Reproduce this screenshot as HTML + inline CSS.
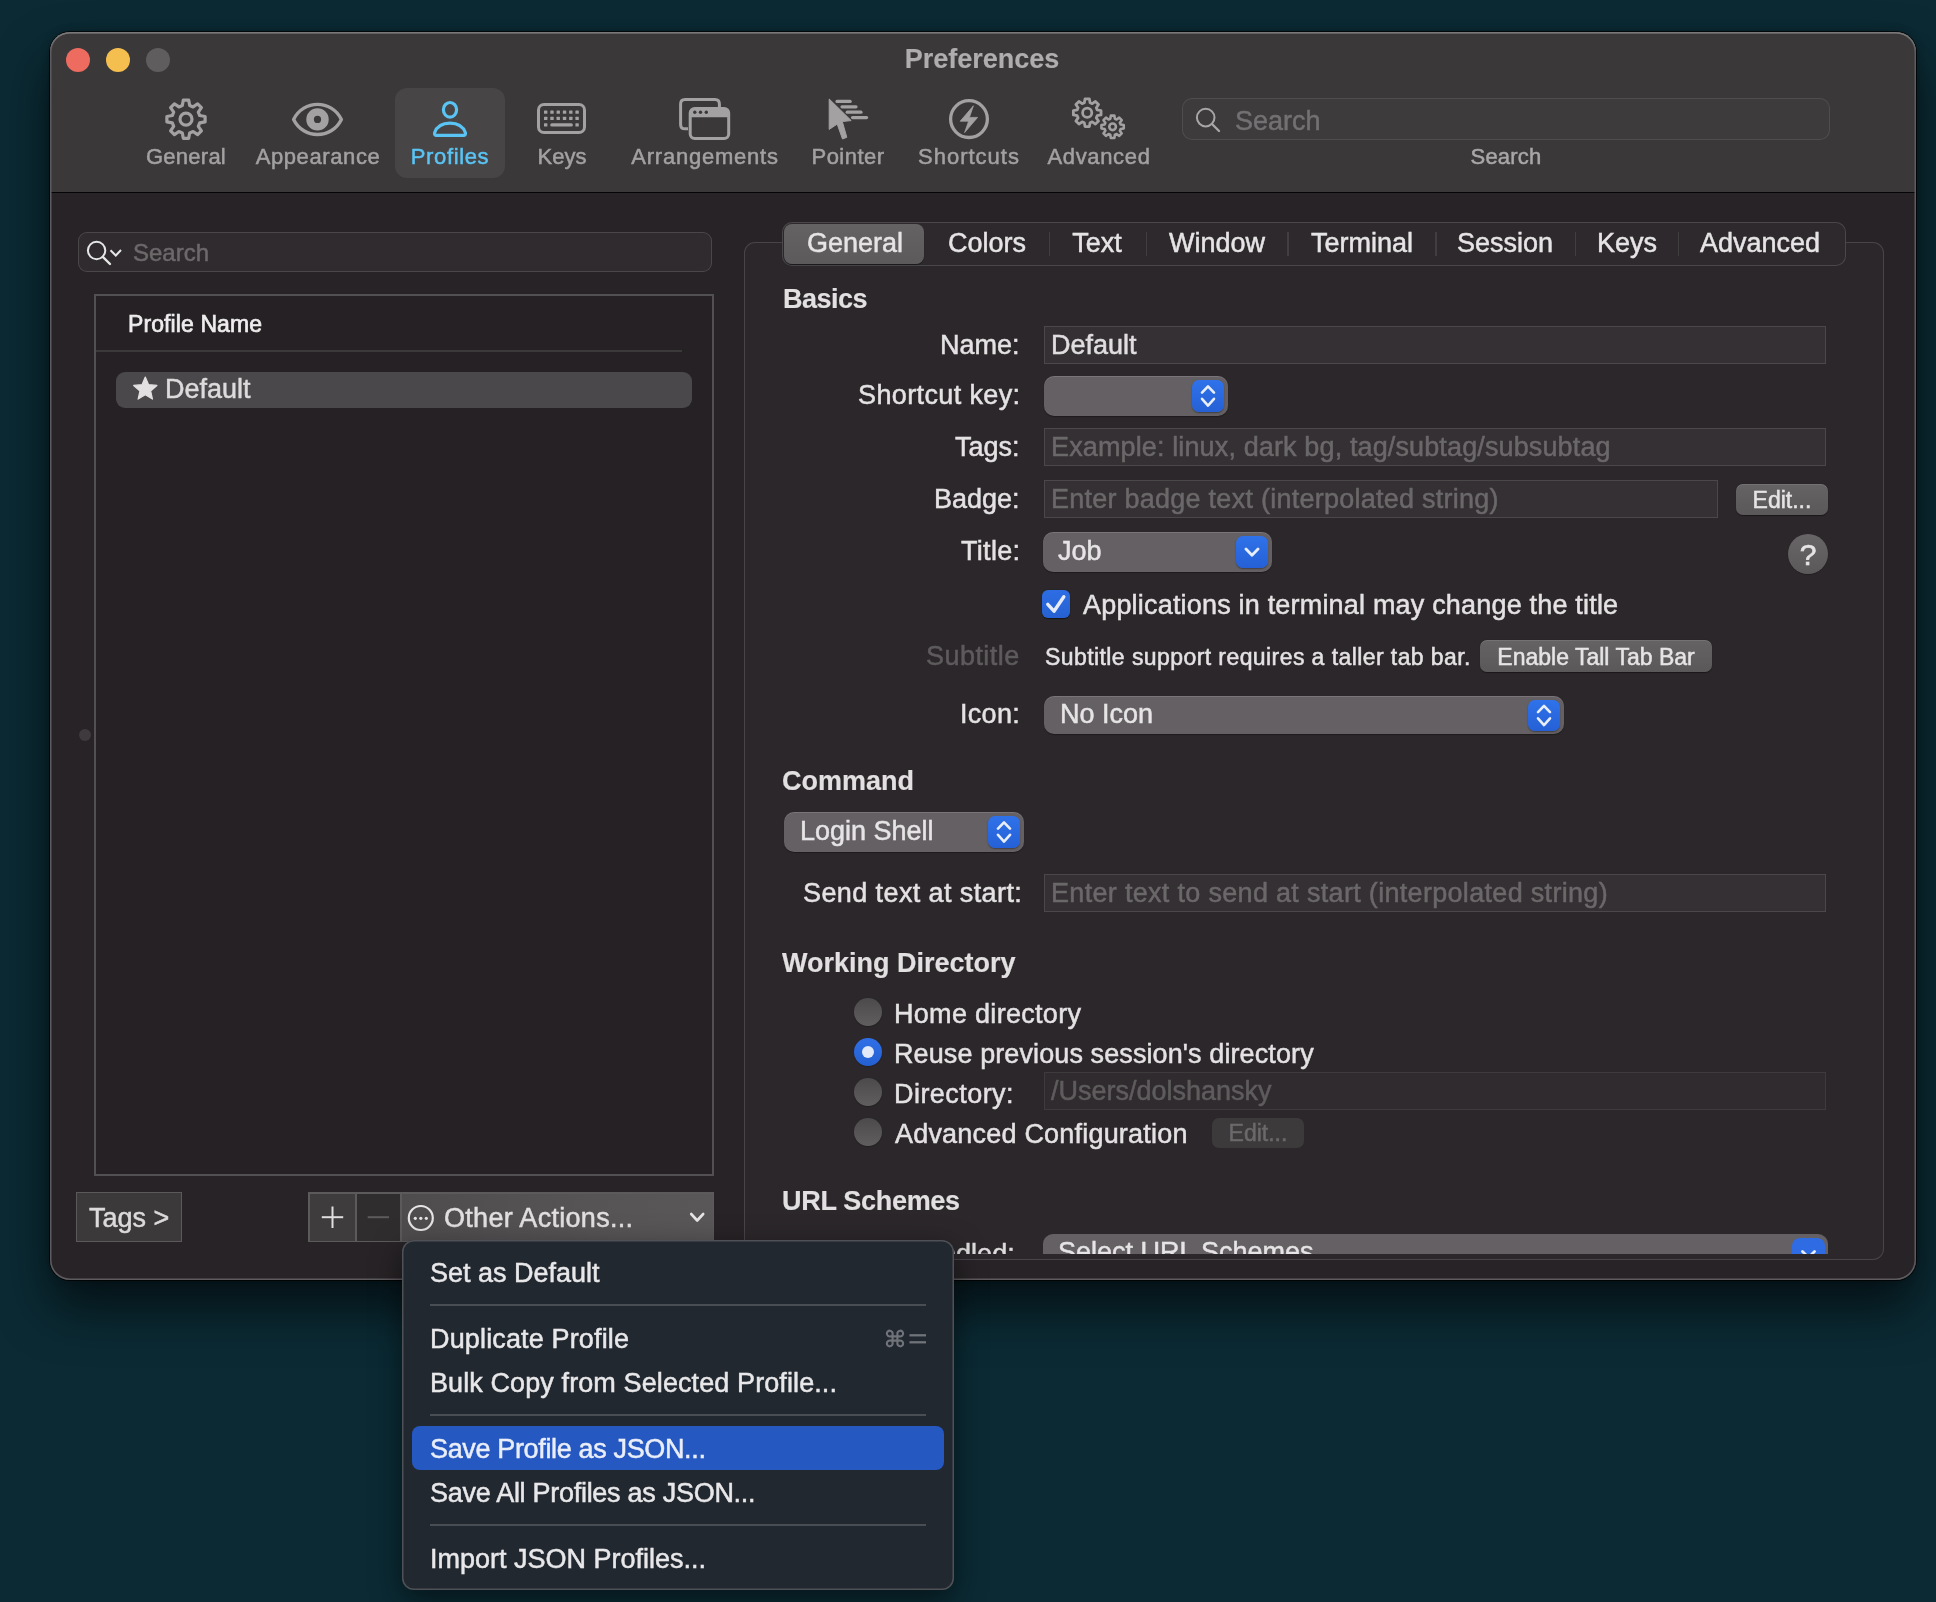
<!DOCTYPE html><html><head><meta charset="utf-8"><style>
html,body{margin:0;padding:0;width:1936px;height:1602px;overflow:hidden}
body{background:#0c2833;font-family:"Liberation Sans",sans-serif;position:relative}
.t{position:absolute;white-space:nowrap;will-change:transform;-webkit-text-stroke:0.5px currentColor}
.r{position:absolute}
</style></head><body>
<div class="r" style="left:0px;top:0px;width:1936px;height:1602px;background:#0b2a34;border-radius:0px;"></div>
<div class="r" style="left:50px;top:32px;width:1866px;height:1248px;background:#272326;border-radius:20px;box-shadow:0 28px 50px rgba(0,0,0,0.6),0 0 8px rgba(0,0,0,0.3),0 0 0 1px rgba(0,0,0,0.7)"></div>
<div class="r" style="left:50px;top:32px;width:1866px;height:161px;background:#3a3839;border-radius:0px;border-radius:20px 20px 0 0"></div>
<div class="r" style="left:51px;top:192px;width:1864px;height:1px;background:#050505;border-radius:0px;"></div>
<div class="r" style="left:50px;top:32px;width:1866px;height:1248px;background:transparent;border-radius:20px;box-shadow:inset 0 1.5px 0 #7a7879,inset 0 0 0 1.5px #5e5b5e"></div>
<div class="r" style="left:66px;top:48px;width:24px;height:24px;background:#ee6b60;border-radius:12px;"></div>
<div class="r" style="left:106px;top:48px;width:24px;height:24px;background:#f5bf4f;border-radius:12px;"></div>
<div class="r" style="left:146px;top:48px;width:24px;height:24px;background:#5f5d5e;border-radius:12px;"></div>
<div class="t" style="left:582px;width:800px;text-align:center;top:46.14px;font-size:27px;line-height:27px;color:#afadae;font-weight:bold;-webkit-text-stroke:0.15px currentColor;">Preferences</div>
<div class="r" style="left:395px;top:88px;width:110px;height:90px;background:#474546;border-radius:12px;"></div>
<div class="t" style="left:-214.5px;width:800px;text-align:center;top:146.38px;font-size:22px;line-height:22px;color:#a3a1a2;letter-spacing:0.25px;">General</div>
<div class="t" style="left:-82.5px;width:800px;text-align:center;top:146.38px;font-size:22px;line-height:22px;color:#a3a1a2;letter-spacing:0.6px;">Appearance</div>
<div class="t" style="left:50px;width:800px;text-align:center;top:146.38px;font-size:22px;line-height:22px;color:#5ac4f4;letter-spacing:0.64px;">Profiles</div>
<div class="t" style="left:161.5px;width:800px;text-align:center;top:146.38px;font-size:22px;line-height:22px;color:#a3a1a2;">Keys</div>
<div class="t" style="left:304.5px;width:800px;text-align:center;top:146.38px;font-size:22px;line-height:22px;color:#a3a1a2;letter-spacing:0.77px;">Arrangements</div>
<div class="t" style="left:448px;width:800px;text-align:center;top:146.38px;font-size:22px;line-height:22px;color:#a3a1a2;letter-spacing:0.45px;">Pointer</div>
<div class="t" style="left:569px;width:800px;text-align:center;top:146.38px;font-size:22px;line-height:22px;color:#a3a1a2;letter-spacing:1.0px;">Shortcuts</div>
<div class="t" style="left:698.5px;width:800px;text-align:center;top:146.38px;font-size:22px;line-height:22px;color:#a3a1a2;letter-spacing:0.67px;">Advanced</div>
<div class="t" style="left:1105.5px;width:800px;text-align:center;top:146.38px;font-size:22px;line-height:22px;color:#a9a7a8;letter-spacing:0.2px;">Search</div>
<div class="r" style="left:1182px;top:98px;width:648px;height:42px;background:#3d3b3c;border-radius:10px;box-shadow:inset 0 0 0 1px #4f4d4e;"></div>
<div class="t" style="left:1235px;top:108.14px;font-size:27px;line-height:27px;color:#737173;">Search</div>
<svg class="r" style="left:0;top:0" width="1936" height="200" viewBox="0 0 1936 200"><path d="M182.32,105.48 L183.31,100.09 L188.69,100.09 L189.68,105.48 L193.10,106.90 L197.62,103.79 L201.41,107.58 L198.30,112.10 L199.72,115.52 L205.11,116.51 L205.11,121.89 L199.72,122.88 L198.30,126.30 L201.41,130.82 L197.62,134.61 L193.10,131.50 L189.68,132.92 L188.69,138.31 L183.31,138.31 L182.32,132.92 L178.90,131.50 L174.38,134.61 L170.59,130.82 L173.70,126.30 L172.28,122.88 L166.89,121.89 L166.89,116.51 L172.28,115.52 L173.70,112.10 L170.59,107.58 L174.38,103.79 L178.90,106.90 Z" fill="none" stroke="#a3a1a2" stroke-width="3.2" stroke-linejoin="round"/><circle cx="186" cy="119.2" r="6" fill="none" stroke="#a3a1a2" stroke-width="3.2"/><path d="M293.6,119.4 C303.5,99.3 331.5,99.3 341.4,119.4 C331.5,139.5 303.5,139.5 293.6,119.4 Z" fill="none" stroke="#a3a1a2" stroke-width="3.4" stroke-linejoin="round"/><circle cx="317.5" cy="119.4" r="11.2" fill="#a3a1a2"/><circle cx="317.5" cy="119.4" r="3.6" fill="#3a3839"/><ellipse cx="450" cy="109.8" rx="6.6" ry="7.3" fill="none" stroke="#5ac4f4" stroke-width="3.2"/><path d="M436.5,135.4 Q434.2,135.4 434.6,132.8 Q438,123.2 450,123.2 Q462,123.2 465.4,132.8 Q465.8,135.4 463.5,135.4 Z" fill="none" stroke="#5ac4f4" stroke-width="3.2" stroke-linejoin="round"/><rect x="538.5" y="104.5" width="46" height="28" rx="5.5" fill="none" stroke="#a3a1a2" stroke-width="3"/><rect x="544.00" y="110.39999999999999" width="3.4" height="3.4" rx="0.6" fill="#a3a1a2"/><rect x="550.28" y="110.39999999999999" width="3.4" height="3.4" rx="0.6" fill="#a3a1a2"/><rect x="556.56" y="110.39999999999999" width="3.4" height="3.4" rx="0.6" fill="#a3a1a2"/><rect x="562.84" y="110.39999999999999" width="3.4" height="3.4" rx="0.6" fill="#a3a1a2"/><rect x="569.12" y="110.39999999999999" width="3.4" height="3.4" rx="0.6" fill="#a3a1a2"/><rect x="575.40" y="110.39999999999999" width="3.4" height="3.4" rx="0.6" fill="#a3a1a2"/><rect x="544.00" y="116.7" width="3.4" height="3.4" rx="0.6" fill="#a3a1a2"/><rect x="550.28" y="116.7" width="3.4" height="3.4" rx="0.6" fill="#a3a1a2"/><rect x="556.56" y="116.7" width="3.4" height="3.4" rx="0.6" fill="#a3a1a2"/><rect x="562.84" y="116.7" width="3.4" height="3.4" rx="0.6" fill="#a3a1a2"/><rect x="569.12" y="116.7" width="3.4" height="3.4" rx="0.6" fill="#a3a1a2"/><rect x="575.40" y="116.7" width="3.4" height="3.4" rx="0.6" fill="#a3a1a2"/><rect x="544.0" y="123.2" width="3.4" height="3.4" rx="0.6" fill="#a3a1a2"/><rect x="575.4" y="123.2" width="3.4" height="3.4" rx="0.6" fill="#a3a1a2"/><rect x="550.2" y="123.2" width="22.7" height="3.4" rx="1.7" fill="#a3a1a2"/><path d="M688,128.8 L685,128.8 Q680.6,128.8 680.6,124.4 L680.6,104 Q680.6,99.5 685,99.5 L715,99.5 Q719.4,99.5 719.4,104 L719.4,108" fill="none" stroke="#a3a1a2" stroke-width="3" stroke-linejoin="round"/><rect x="690.2" y="108.5" width="38.5" height="30" rx="4.5" fill="none" stroke="#a3a1a2" stroke-width="3"/><path d="M690.2,117.3 L690.2,113 Q690.2,108.5 694.7,108.5 L724.2,108.5 Q728.7,108.5 728.7,113 L728.7,117.3 Z" fill="#a3a1a2"/><circle cx="694.8" cy="112.3" r="1.7" fill="#3a3839"/><circle cx="700.5" cy="112.3" r="1.7" fill="#3a3839"/><circle cx="706.3" cy="112.3" r="1.7" fill="#3a3839"/><path d="M829.2,99 L851.2,120.6 L842.3,121.5 L846.8,137.3 L842.5,139 L837.2,124.1 L829.2,129.4 Z" fill="#a3a1a2" stroke="#a3a1a2" stroke-width="1" stroke-linejoin="round"/><line x1="837" y1="101.4" x2="850.2" y2="101.4" stroke="#a3a1a2" stroke-width="3.2" stroke-linecap="round"/><line x1="842" y1="106.8" x2="856" y2="106.8" stroke="#a3a1a2" stroke-width="3.2" stroke-linecap="round"/><line x1="847.2" y1="112.2" x2="861" y2="112.2" stroke="#a3a1a2" stroke-width="3.2" stroke-linecap="round"/><line x1="852.5" y1="117.6" x2="866.6" y2="117.6" stroke="#a3a1a2" stroke-width="3.2" stroke-linecap="round"/><circle cx="969" cy="119.1" r="18.4" fill="none" stroke="#a3a1a2" stroke-width="3.3"/><path d="M973.4,105.8 L960.2,121.2 L968.6,121.2 L964.6,132.6 L977.6,117.4 L969.4,117.4 Z" fill="#a3a1a2" stroke="#a3a1a2" stroke-width="0.8" stroke-linejoin="round"/><path d="M1084.33,102.80 L1085.01,98.97 L1089.39,98.97 L1090.07,102.80 L1092.24,103.70 L1095.43,101.47 L1098.53,104.57 L1096.30,107.76 L1097.20,109.93 L1101.03,110.61 L1101.03,114.99 L1097.20,115.67 L1096.30,117.84 L1098.53,121.03 L1095.43,124.13 L1092.24,121.90 L1090.07,122.80 L1089.39,126.63 L1085.01,126.63 L1084.33,122.80 L1082.16,121.90 L1078.97,124.13 L1075.87,121.03 L1078.10,117.84 L1077.20,115.67 L1073.37,114.99 L1073.37,110.61 L1077.20,109.93 L1078.10,107.76 L1075.87,104.57 L1078.97,101.47 L1082.16,103.70 Z" fill="none" stroke="#a3a1a2" stroke-width="2.8" stroke-linejoin="round"/><circle cx="1087.2" cy="112.8" r="4.6" fill="none" stroke="#a3a1a2" stroke-width="2.8"/><path d="M1110.31,118.82 L1110.83,115.64 L1114.37,115.64 L1114.89,118.82 L1116.62,119.54 L1119.24,117.66 L1121.74,120.16 L1119.86,122.78 L1120.58,124.51 L1123.76,125.03 L1123.76,128.57 L1120.58,129.09 L1119.86,130.82 L1121.74,133.44 L1119.24,135.94 L1116.62,134.06 L1114.89,134.78 L1114.37,137.96 L1110.83,137.96 L1110.31,134.78 L1108.58,134.06 L1105.96,135.94 L1103.46,133.44 L1105.34,130.82 L1104.62,129.09 L1101.44,128.57 L1101.44,125.03 L1104.62,124.51 L1105.34,122.78 L1103.46,120.16 L1105.96,117.66 L1108.58,119.54 Z" fill="none" stroke="#a3a1a2" stroke-width="2.6" stroke-linejoin="round"/><circle cx="1112.6" cy="126.8" r="3.3" fill="none" stroke="#a3a1a2" stroke-width="2.6"/><circle cx="1205.7" cy="117.6" r="8.8" fill="none" stroke="#a8a6a7" stroke-width="2"/><line x1="1212" y1="124" x2="1219" y2="131" stroke="#a8a6a7" stroke-width="2.4" stroke-linecap="round"/></svg>
<div class="r" style="left:78px;top:232px;width:634px;height:40px;background:#2f2b2e;border-radius:9px;box-shadow:inset 0 0 0 1px #4a4749;"></div>
<div class="t" style="left:133px;top:240.68px;font-size:24px;line-height:24px;color:#6c696b;">Search</div>
<div class="r" style="left:94px;top:294px;width:620px;height:882px;background:#252124;border-radius:0px;box-shadow:inset 0 0 0 1px #565355;box-shadow:inset 0 0 0 2px #525052"></div>
<div class="t" style="left:128px;top:313.03px;font-size:23px;line-height:23px;color:#eeeced;letter-spacing:0.1px;-webkit-text-stroke:0.7px #eeeced">Profile Name</div>
<div class="r" style="left:96px;top:350px;width:586px;height:2px;background:#3c393b;border-radius:0px;"></div>
<div class="r" style="left:116px;top:372px;width:576px;height:36px;background:#4a484a;border-radius:9px;"></div>
<svg class="r" style="left:0;top:0" width="800" height="1300" viewBox="0 0 800 1300"><circle cx="96.6" cy="250.5" r="8.7" fill="none" stroke="#e6e6e6" stroke-width="2"/><line x1="102.8" y1="256.8" x2="110" y2="264" stroke="#e6e6e6" stroke-width="2.4" stroke-linecap="round"/><path d="M110.5,250.2 L115.8,255.5 L121,250" fill="none" stroke="#e6e6e6" stroke-width="2"/><path d="M145.30,377.00 L148.59,384.67 L156.90,385.43 L150.63,390.93 L152.47,399.07 L145.30,394.80 L138.13,399.07 L139.97,390.93 L133.70,385.43 L142.01,384.67 Z" fill="#e2e0e1" stroke="#e2e0e1" stroke-width="1.2" stroke-linejoin="round"/></svg>
<div class="t" style="left:165px;top:376.14px;font-size:27px;line-height:27px;color:#dddbdc;">Default</div>
<div class="r" style="left:79px;top:729px;width:12px;height:12px;background:#3e3a3d;border-radius:6px;"></div>
<div class="r" style="left:76px;top:1192px;width:106px;height:50px;background:#3b393a;border-radius:0px;box-shadow:inset 0 0 0 1px #5b595a;"></div>
<div class="t" style="left:89px;top:1205.14px;font-size:27px;line-height:27px;color:#dcdadb;">Tags &gt;</div>
<div class="r" style="left:308px;top:1192px;width:406px;height:50px;background:#5c5a5b;border-radius:0px;"></div>
<div class="r" style="left:309.5px;top:1193.5px;width:45.0px;height:47.0px;background:#3e3c3d;border-radius:0px;"></div>
<div class="r" style="left:356.5px;top:1193.5px;width:43.0px;height:47.0px;background:#2f2d2e;border-radius:0px;"></div>
<div class="r" style="left:401.5px;top:1193.5px;width:311.0px;height:47.0px;background:linear-gradient(90deg,#4f4c4e,#575456 60%,#5a5759);border-radius:0px;"></div>
<svg class="r" style="left:300px;top:1185px" width="420" height="60" viewBox="300 1185 420 60"><line x1="332.5" y1="1206.5" x2="332.5" y2="1228" stroke="#e0dedf" stroke-width="2"/><line x1="321.8" y1="1217.2" x2="343.2" y2="1217.2" stroke="#e0dedf" stroke-width="2"/><line x1="367.7" y1="1217.2" x2="389" y2="1217.2" stroke="#5d5a5c" stroke-width="2"/><circle cx="420.8" cy="1218" r="12" fill="none" stroke="#e6e4e5" stroke-width="2.2"/><circle cx="415.3" cy="1218.3" r="1.6" fill="#e6e4e5"/><circle cx="420.8" cy="1218.3" r="1.6" fill="#e6e4e5"/><circle cx="426.3" cy="1218.3" r="1.6" fill="#e6e4e5"/><path d="M691.2,1214 L697.2,1220.5 L703.2,1214" fill="none" stroke="#e6e4e5" stroke-width="2.6" stroke-linecap="round" stroke-linejoin="round"/></svg>
<div class="t" style="left:444px;top:1205.14px;font-size:27px;line-height:27px;color:#e2e0e1;letter-spacing:0.3px;">Other Actions...</div>
<div class="r" style="left:744px;top:242px;width:1140px;height:1018px;background:#2b272a;border-radius:11px;box-shadow:inset 0 0 0 1px #47444a;"></div>
<div class="r" style="left:782px;top:222px;width:1064px;height:44px;background:#2d292c;border-radius:10px;box-shadow:inset 0 0 0 1px #4a474a;"></div>
<div class="r" style="left:784px;top:224px;width:140px;height:40px;background:linear-gradient(#656264,#5d5a5c);border-radius:8px;box-shadow:0 1px 1px rgba(0,0,0,0.4)"></div>
<div class="r" style="left:1048.5px;top:232px;width:1.5px;height:24px;background:#413e40;border-radius:0px;"></div>
<div class="r" style="left:1145.5px;top:232px;width:1.5px;height:24px;background:#413e40;border-radius:0px;"></div>
<div class="r" style="left:1287px;top:232px;width:1.5px;height:24px;background:#413e40;border-radius:0px;"></div>
<div class="r" style="left:1435px;top:232px;width:1.5px;height:24px;background:#413e40;border-radius:0px;"></div>
<div class="r" style="left:1574.5px;top:232px;width:1.5px;height:24px;background:#413e40;border-radius:0px;"></div>
<div class="r" style="left:1677.5px;top:232px;width:1.5px;height:24px;background:#413e40;border-radius:0px;"></div>
<div class="t" style="left:454.5px;width:800px;text-align:center;top:230.14px;font-size:27px;line-height:27px;color:#e6e4e5;">General</div>
<div class="t" style="left:587px;width:800px;text-align:center;top:230.14px;font-size:27px;line-height:27px;color:#e6e4e5;">Colors</div>
<div class="t" style="left:697px;width:800px;text-align:center;top:230.14px;font-size:27px;line-height:27px;color:#e6e4e5;">Text</div>
<div class="t" style="left:816.5px;width:800px;text-align:center;top:230.14px;font-size:27px;line-height:27px;color:#e6e4e5;">Window</div>
<div class="t" style="left:961.5px;width:800px;text-align:center;top:230.14px;font-size:27px;line-height:27px;color:#e6e4e5;">Terminal</div>
<div class="t" style="left:1105px;width:800px;text-align:center;top:230.14px;font-size:27px;line-height:27px;color:#e6e4e5;">Session</div>
<div class="t" style="left:1226.5px;width:800px;text-align:center;top:230.14px;font-size:27px;line-height:27px;color:#e6e4e5;">Keys</div>
<div class="t" style="left:1360px;width:800px;text-align:center;top:230.14px;font-size:27px;line-height:27px;color:#e6e4e5;">Advanced</div>
<div class="t" style="left:783px;top:286.14px;font-size:27px;line-height:27px;color:#e2e0e1;font-weight:bold;-webkit-text-stroke:0.15px currentColor;letter-spacing:-0.5px;">Basics</div>
<div class="t" style="right:916px;top:332.14px;font-size:27px;line-height:27px;color:#e4e2e3;text-align:right;">Name:</div>
<div class="r" style="left:1044px;top:326px;width:782px;height:38px;background:#343033;border-radius:0px;box-shadow:inset 0 0 0 1px #4b484a;"></div>
<div class="t" style="left:1051px;top:332.14px;font-size:27px;line-height:27px;color:#e0dedf;">Default</div>
<div class="t" style="right:916px;top:382.14px;font-size:27px;line-height:27px;color:#e4e2e3;text-align:right;letter-spacing:0.37px;">Shortcut key:</div>
<div class="r" style="left:1044px;top:376px;width:184px;height:40px;background:#646063;border-radius:10px;box-shadow:inset 0 1px 0 rgba(255,255,255,0.13),0 1px 1px rgba(0,0,0,0.3)"></div>
<div class="r" style="left:1192px;top:380px;width:32px;height:32px;background:linear-gradient(#2f72ea,#2560d6);border-radius:7px;box-shadow:0 1px 1.5px rgba(0,0,0,0.35)"></div>
<svg class="r" style="left:1192px;top:380px" width="32" height="32" viewBox="1192 380 32 32"><path d="M1202.0,392.6 L1208.0,386.4 L1214.0,392.6" fill="none" stroke="#e8eefa" stroke-width="2.6" stroke-linecap="round" stroke-linejoin="round"/><path d="M1202.0,398.8 L1208.0,405.6 L1214.0,398.8" fill="none" stroke="#e8eefa" stroke-width="2.6" stroke-linecap="round" stroke-linejoin="round"/></svg>
<div class="t" style="right:916px;top:434.14px;font-size:27px;line-height:27px;color:#e4e2e3;text-align:right;">Tags:</div>
<div class="r" style="left:1044px;top:428px;width:782px;height:38px;background:#343033;border-radius:0px;box-shadow:inset 0 0 0 1px #4b484a;"></div>
<div class="t" style="left:1051px;top:434.14px;font-size:27px;line-height:27px;color:#6b686a;letter-spacing:0.13px;">Example: linux, dark bg, tag/subtag/subsubtag</div>
<div class="t" style="right:916px;top:486.14px;font-size:27px;line-height:27px;color:#e4e2e3;text-align:right;">Badge:</div>
<div class="r" style="left:1044px;top:480px;width:674px;height:38px;background:#343033;border-radius:0px;box-shadow:inset 0 0 0 1px #4b484a;"></div>
<div class="t" style="left:1051px;top:486.14px;font-size:27px;line-height:27px;color:#6b686a;letter-spacing:0.25px;">Enter badge text (interpolated string)</div>
<div class="r" style="left:1736px;top:484px;width:92px;height:31px;background:linear-gradient(#666365,#5b585a);border-radius:7px;box-shadow:inset 0 1px 0 rgba(255,255,255,0.1),0 0.5px 1px rgba(0,0,0,0.4)"></div>
<div class="t" style="left:1382px;width:800px;text-align:center;top:488.53px;font-size:23px;line-height:23px;color:#e6e4e5;">Edit...</div>
<div class="t" style="right:916px;top:538.14px;font-size:27px;line-height:27px;color:#e4e2e3;text-align:right;letter-spacing:0.3px;">Title:</div>
<div class="r" style="left:1043px;top:532px;width:229px;height:40px;background:#646063;border-radius:10px;box-shadow:inset 0 1px 0 rgba(255,255,255,0.13),0 1px 1px rgba(0,0,0,0.3)"></div>
<div class="t" style="left:1058px;top:538.14px;font-size:27px;line-height:27px;color:#e6e4e5;">Job</div>
<div class="r" style="left:1236px;top:536px;width:32px;height:32px;background:linear-gradient(#2f72ea,#2560d6);border-radius:7px;box-shadow:0 1px 1.5px rgba(0,0,0,0.35)"></div>
<svg class="r" style="left:1236px;top:536px" width="32" height="32" viewBox="1236 536 32 32"><path d="M1246.0,549.0 L1252.0,555.2 L1258.0,549.0" fill="none" stroke="#e8eefa" stroke-width="2.8" stroke-linecap="round" stroke-linejoin="round"/></svg>
<div class="r" style="left:1788px;top:534px;width:40px;height:40px;background:linear-gradient(#686567,#5c595b);border-radius:20px;box-shadow:0 0.5px 1px rgba(0,0,0,0.4)"></div>
<div class="t" style="left:1408px;width:800px;text-align:center;top:540.11px;font-size:30px;line-height:30px;color:#e6e4e5;-webkit-text-stroke:0.6px #e6e4e5">?</div>
<div class="r" style="left:1042px;top:590px;width:28px;height:28px;background:linear-gradient(#2d6de4,#2561d2);border-radius:6px;box-shadow:0 0.5px 1px rgba(0,0,0,0.5)"></div>
<svg class="r" style="left:1042px;top:590px" width="28" height="28" viewBox="0 0 28 28"><path d="M5.8,14.3 L12,21.2 L21.8,6.7" fill="none" stroke="#e6ecf9" stroke-width="3.4" stroke-linecap="round" stroke-linejoin="round"/></svg>
<div class="t" style="left:1083px;top:591.64px;font-size:27px;line-height:27px;color:#e4e2e3;letter-spacing:0.19px;">Applications in terminal may change the title</div>
<div class="t" style="right:916px;top:643.14px;font-size:27px;line-height:27px;color:#5e5b5d;text-align:right;letter-spacing:0.45px;">Subtitle</div>
<div class="t" style="left:1045px;top:645.53px;font-size:23px;line-height:23px;color:#e4e2e3;letter-spacing:0.42px;">Subtitle support requires a taller tab bar.</div>
<div class="r" style="left:1480px;top:640px;width:232px;height:32px;background:linear-gradient(#666365,#5b585a);border-radius:7px;box-shadow:inset 0 1px 0 rgba(255,255,255,0.1),0 0.5px 1px rgba(0,0,0,0.4)"></div>
<div class="t" style="left:1196px;width:800px;text-align:center;top:645.53px;font-size:23px;line-height:23px;color:#e6e4e5;">Enable Tall Tab Bar</div>
<div class="t" style="right:916px;top:701.14px;font-size:27px;line-height:27px;color:#e4e2e3;text-align:right;letter-spacing:0.3px;">Icon:</div>
<div class="r" style="left:1044px;top:696px;width:520px;height:38px;background:#646063;border-radius:10px;box-shadow:inset 0 1px 0 rgba(255,255,255,0.13),0 1px 1px rgba(0,0,0,0.3)"></div>
<div class="t" style="left:1060px;top:701.14px;font-size:27px;line-height:27px;color:#e6e4e5;">No Icon</div>
<div class="r" style="left:1528px;top:700px;width:32px;height:31px;background:linear-gradient(#2f72ea,#2560d6);border-radius:7px;box-shadow:0 1px 1.5px rgba(0,0,0,0.35)"></div>
<svg class="r" style="left:1528px;top:700px" width="32" height="31" viewBox="1528 700 32 31"><path d="M1538.0,712.1 L1544.0,705.9 L1550.0,712.1" fill="none" stroke="#e8eefa" stroke-width="2.6" stroke-linecap="round" stroke-linejoin="round"/><path d="M1538.0,718.3 L1544.0,725.1 L1550.0,718.3" fill="none" stroke="#e8eefa" stroke-width="2.6" stroke-linecap="round" stroke-linejoin="round"/></svg>
<div class="t" style="left:782px;top:768.14px;font-size:27px;line-height:27px;color:#e2e0e1;font-weight:bold;-webkit-text-stroke:0.15px currentColor;">Command</div>
<div class="r" style="left:784px;top:812px;width:240px;height:40px;background:#646063;border-radius:10px;box-shadow:inset 0 1px 0 rgba(255,255,255,0.13),0 1px 1px rgba(0,0,0,0.3)"></div>
<div class="t" style="left:800px;top:818.14px;font-size:27px;line-height:27px;color:#e6e4e5;">Login Shell</div>
<div class="r" style="left:988px;top:816px;width:32px;height:32px;background:linear-gradient(#2f72ea,#2560d6);border-radius:7px;box-shadow:0 1px 1.5px rgba(0,0,0,0.35)"></div>
<svg class="r" style="left:988px;top:816px" width="32" height="32" viewBox="988 816 32 32"><path d="M998.0,828.6 L1004.0,822.4 L1010.0,828.6" fill="none" stroke="#e8eefa" stroke-width="2.6" stroke-linecap="round" stroke-linejoin="round"/><path d="M998.0,834.8 L1004.0,841.6 L1010.0,834.8" fill="none" stroke="#e8eefa" stroke-width="2.6" stroke-linecap="round" stroke-linejoin="round"/></svg>
<div class="t" style="right:913.5px;top:880.14px;font-size:27px;line-height:27px;color:#e4e2e3;text-align:right;letter-spacing:0.4px;">Send text at start:</div>
<div class="r" style="left:1044px;top:874px;width:782px;height:38px;background:#343033;border-radius:0px;box-shadow:inset 0 0 0 1px #4b484a;"></div>
<div class="t" style="left:1051px;top:880.14px;font-size:27px;line-height:27px;color:#6b686a;letter-spacing:0.31px;">Enter text to send at start (interpolated string)</div>
<div class="t" style="left:782px;top:950.14px;font-size:27px;line-height:27px;color:#e2e0e1;font-weight:bold;-webkit-text-stroke:0.15px currentColor;">Working Directory</div>
<div class="r" style="left:853.5px;top:997.5px;width:28.0px;height:28.0px;background:linear-gradient(#4d4a4c,#615e60);border-radius:14px;box-shadow:0 0.5px 1px rgba(0,0,0,0.4)"></div>
<div class="r" style="left:853.5px;top:1078px;width:28.0px;height:28px;background:linear-gradient(#4d4a4c,#615e60);border-radius:14px;box-shadow:0 0.5px 1px rgba(0,0,0,0.4)"></div>
<div class="r" style="left:853.5px;top:1118px;width:28.0px;height:28px;background:linear-gradient(#4d4a4c,#615e60);border-radius:14px;box-shadow:0 0.5px 1px rgba(0,0,0,0.4)"></div>
<div class="r" style="left:853.5px;top:1038px;width:28.0px;height:28px;background:linear-gradient(#2f6fe6,#2560d2);border-radius:14px;box-shadow:0 0.5px 1px rgba(0,0,0,0.4)"></div>
<div class="r" style="left:861.5px;top:1046px;width:12.0px;height:12px;background:#e2e9f8;border-radius:6px;"></div>
<div class="t" style="left:894px;top:1000.64px;font-size:27px;line-height:27px;color:#e4e2e3;letter-spacing:0.3px;">Home directory</div>
<div class="t" style="left:894px;top:1040.64px;font-size:27px;line-height:27px;color:#e4e2e3;letter-spacing:0.1px;">Reuse previous session's directory</div>
<div class="t" style="left:894px;top:1080.64px;font-size:27px;line-height:27px;color:#e4e2e3;letter-spacing:0.45px;">Directory:</div>
<div class="r" style="left:1044px;top:1072px;width:782px;height:38px;background:#2f2b2e;border-radius:0px;box-shadow:inset 0 0 0 1px #3e3b3d;"></div>
<div class="t" style="left:1051px;top:1078.14px;font-size:27px;line-height:27px;color:#5f5c5e;">/Users/dolshansky</div>
<div class="t" style="left:895px;top:1120.64px;font-size:27px;line-height:27px;color:#e4e2e3;letter-spacing:0.2px;">Advanced Configuration</div>
<div class="r" style="left:1212px;top:1118px;width:92px;height:30px;background:#3d3a3c;border-radius:7px;"></div>
<div class="t" style="left:858px;width:800px;text-align:center;top:1121.53px;font-size:23px;line-height:23px;color:#6c696b;">Edit...</div>
<div class="t" style="left:782px;top:1188.14px;font-size:27px;line-height:27px;color:#e2e0e1;font-weight:bold;-webkit-text-stroke:0.15px currentColor;letter-spacing:-0.3px;">URL Schemes</div>
<div class="r" style="left:745px;top:1230px;width:1139px;height:24px;overflow:hidden">
<div class="t" style="right:869px;top:10.5px;font-size:27px;line-height:27px;color:#dedcdd">Schemes handled:</div>
<div class="r" style="left:298px;top:4px;width:785px;height:40px;background:#646063;border-radius:10px"></div>
<div class="t" style="left:313px;top:8.5px;font-size:27px;line-height:27px;color:#e6e4e5">Select URL Schemes</div>
<div class="r" style="left:1047px;top:8px;width:33px;height:33px;background:#2f6be2;border-radius:8px"></div>
<svg class="r" style="left:1047px;top:8px" width="33" height="33"><path d="M10.5,13.5 L16.5,19.5 L22.5,13.5" fill="none" stroke="#e8eefa" stroke-width="2.8" stroke-linecap="round" stroke-linejoin="round"/></svg>
</div>
<div class="r" style="left:402px;top:1240px;width:552px;height:350px;background:#22282f;border-radius:12px;box-shadow:inset 0 0 0 1.5px #4e5156, 0 10px 30px rgba(0,0,0,0.5)"></div>
<div class="t" style="left:430px;top:1260.14px;font-size:27px;line-height:27px;color:#e8e8ea;">Set as Default</div>
<div class="r" style="left:430px;top:1304px;width:496px;height:2px;background:#494e54;border-radius:0px;"></div>
<div class="t" style="left:430px;top:1326.14px;font-size:27px;line-height:27px;color:#e8e8ea;letter-spacing:0.15px;">Duplicate Profile</div>
<svg class="r" style="left:885px;top:1328px" width="42" height="21" viewBox="0 0 42 21"><path d="M7.6,6.2 A2.9,2.9 0 1 0 5.4,8.4 H14.6 A2.9,2.9 0 1 0 12.4,6.2 V14.8 A2.9,2.9 0 1 0 14.6,12.6 H5.4 A2.9,2.9 0 1 0 7.6,14.8 Z" fill="none" stroke="#70737a" stroke-width="2.1" stroke-linejoin="round"/><line x1="24.5" y1="7.3" x2="41" y2="7.3" stroke="#70737a" stroke-width="2.3"/><line x1="24.5" y1="14.3" x2="41" y2="14.3" stroke="#70737a" stroke-width="2.3"/></svg>
<div class="t" style="left:430px;top:1370.14px;font-size:27px;line-height:27px;color:#e8e8ea;letter-spacing:0.1px;">Bulk Copy from Selected Profile...</div>
<div class="r" style="left:430px;top:1414px;width:496px;height:2px;background:#494e54;border-radius:0px;"></div>
<div class="r" style="left:412px;top:1426px;width:532px;height:44px;background:#2658c2;border-radius:8px;"></div>
<div class="t" style="left:430px;top:1436.14px;font-size:27px;line-height:27px;color:#eaeef8;letter-spacing:-0.35px;">Save Profile as JSON...</div>
<div class="t" style="left:430px;top:1480.14px;font-size:27px;line-height:27px;color:#e8e8ea;letter-spacing:-0.28px;">Save All Profiles as JSON...</div>
<div class="r" style="left:430px;top:1524px;width:496px;height:2px;background:#494e54;border-radius:0px;"></div>
<div class="t" style="left:430px;top:1546.14px;font-size:27px;line-height:27px;color:#e8e8ea;">Import JSON Profiles...</div>
</body></html>
